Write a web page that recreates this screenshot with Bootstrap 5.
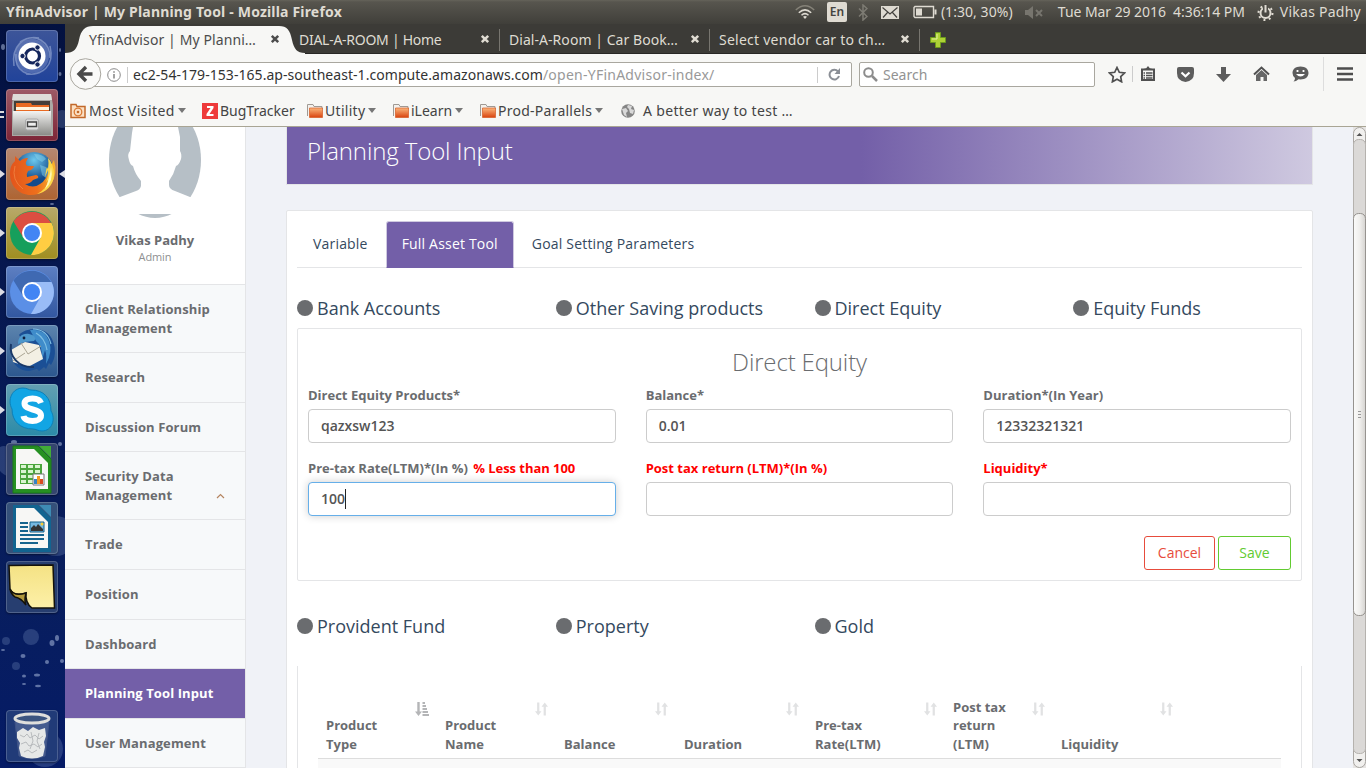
<!DOCTYPE html>
<html lang="en">
<head>
<meta charset="utf-8">
<title>YfinAdvisor | My Planning Tool</title>
<meta name="viewport" content="width=device-width, initial-scale=1">
<link href="https://cdn.jsdelivr.net/npm/bootstrap@5.3.0/dist/css/bootstrap.min.css" rel="stylesheet">
<style>
:root{--purple:#735fa8;--line:#e4e5e7;--ink:#6a6c6f;--ui:"Noto Sans","Open Sans",sans-serif}
html,body{height:100%;overflow:hidden}
body{width:1366px;height:768px;font-family:"Open Sans",sans-serif;font-size:13px;line-height:1.42857;color:var(--ink);background:#f0f2f7}
svg{display:block;flex:none}
.desk{width:1366px;height:768px}
/* desktop menu bar */
.menubar{height:24px;background:linear-gradient(#65635a 0,#57554e 2px,#403f3a 24px);color:#dfdbd2;font:14px/24px var(--ui);padding:0 5px 0 6px;white-space:nowrap}
.menubar .wintitle{font-weight:700;font-size:14px;width:789px;letter-spacing:.18px}
.kbd-lang{width:20px;height:20px;background:#dfdbd2;color:#454440;border-radius:2px;font:600 12px/20px var(--ui);text-align:center}
/* launcher */
.launcher{width:65px;gap:7px;padding-top:6px;background:#071a55;position:relative}
.launcher>svg.sky{position:absolute;left:0;top:0}
.tile{width:52px;height:52px;margin-left:6px;border-radius:4px;position:relative;box-shadow:inset 0 0 0 1px #ffffff30,0 1px 2px #0006;flex:none}
.tile svg{width:52px;height:52px}
.tile.run::before{content:"";position:absolute;left:-6px;top:22px;border-left:5px solid #dcdce4;border-top:4px solid transparent;border-bottom:4px solid transparent}
.tile.focus::after{content:"";position:absolute;right:-7px;top:22px;border-right:6px solid #dcdce4;border-top:4px solid transparent;border-bottom:4px solid transparent}
.tile.two::before{content:"";position:absolute;left:-6px;top:22px;width:4px;height:7px;border-top:2px solid #ddd;border-bottom:2px solid #ddd}
/* browser chrome */
.browser{width:1301px;font-family:var(--ui)}
.tabstrip{height:30px;background:#3c3b37;padding-left:14px;border-bottom:1px solid #282725;position:relative;font-size:14px;line-height:31px;color:#dfdbd2;white-space:nowrap}
.tabstrip>svg.shape{position:absolute;left:0;top:2px}
.btab{width:210px;padding:1px 9px 0 10px;position:relative}
.btab+.btab+.btab::before{content:"";position:absolute;left:0;top:5px;height:22px;width:1px;background:#77756f}
.btab.last::after{content:"";position:absolute;right:-1px;top:5px;height:22px;width:1px;background:#77756f}
.btab.on{color:#4c4c4c}
.navrow{height:41px;background:#f7f7f5;position:relative}
.urlbox{height:25px;margin:8px 0 0 20px;width:767px;border:1px solid #a9a79f;border-radius:2px;background:#fff;font-size:14px;line-height:23px;color:#333;padding-left:21px;white-space:nowrap;letter-spacing:.05px}
.urlbox .dim{color:#999;letter-spacing:.25px}
.searchbox{height:25px;margin:8px 0 0 7px;width:236px;border:1px solid #a9a79f;border-radius:2px;background:#fff;color:#929292;font-size:14px;line-height:23px;padding-left:3px}
.backbtn{position:absolute;left:4px;top:4px}
.vline{width:1px;height:16px;background:#ccc}
.bmrow{height:32px;background:#f7f7f5;border-bottom:1px solid #a9a594;padding-left:5px;font-size:14px;line-height:30px;color:#444;white-space:nowrap;gap:0}
.bmk{gap:2px}
.caret{border-top:5px solid #777;border-left:4.5px solid transparent;border-right:4.5px solid transparent;margin-left:1px}
/* page */
.page{height:641px;overflow:hidden;font-family:"Open Sans",sans-serif;background:#f0f2f7}
.side{width:181px;background:#f7f9fa;border-right:1px solid var(--line);flex:none}
.profile{background:#fff;height:158px;border-bottom:1px solid var(--line)}
.profile .who{font-weight:700;letter-spacing:0;margin-top:13px}
.profile small{font-size:11px;color:#8e8f91;line-height:14px;letter-spacing:-.1px}
.side a{display:flex;justify-content:space-between;align-items:flex-end;padding:15px 20px;border-bottom:1px solid var(--line);font-weight:700;color:var(--ink);text-decoration:none;letter-spacing:.1px}
.side a.on{background:var(--purple);color:#fff}
.main-col{width:1027px;margin-left:40px;flex:none}
.banner{height:58px;border:1px solid var(--line);border-top:0;background:linear-gradient(90deg,var(--purple) 56%,#cfc9e0 100%);color:#fff;font-size:24px;font-weight:300;line-height:26px;padding:11px 20px;letter-spacing:-.12px}
.hpanel{margin-top:25px;height:600px;background:#fff;border:1px solid var(--line);border-radius:2px;padding:10px 10px}
.nav-tabs{--bs-nav-tabs-border-color:#e4e5e7;height:47px;font-size:14px;letter-spacing:.19px}
.nav-tabs .nav-link{color:#34495e;padding:12px 15px 13px;line-height:20px;border-radius:3px 3px 0 0;margin-right:2px}
.nav-tabs .nav-link.active{background:var(--purple);color:#fff;border-color:#cfc9e0;border-bottom-color:var(--purple)}
.kinds{--bs-gutter-x:30px;font-size:18px;line-height:26px;color:#34495e}
.kinds>div{display:flex;align-items:center;gap:4px}
.dot{width:16px;height:16px;border-radius:50%;background:#6a6c6f}
.formbox{border:1px solid var(--line);border-radius:2px;height:253px;padding:0 10px}
.formbox h3{font-size:24px;font-weight:300;color:#6a6c6f;line-height:26px;margin:20px 0 11px;text-align:center;letter-spacing:-.15px}
.formbox .row{--bs-gutter-x:30px}
.form-label{font-weight:700;margin:0 0 5px;line-height:18px;display:block;white-space:nowrap}
.bad{color:#f00}
.form-control{height:34px;font-size:14px;font-weight:600;color:#555;border-color:#ccc;border-radius:4px;padding:6px 12px;line-height:20px}
.form-control.hot{border-color:#66afe9;box-shadow:0 0 8px #0003}
.caretbar{width:1px;height:20px;background:#222;display:inline-block;vertical-align:top}
.btn{font-size:14px;line-height:20px;padding:6px 12px;border-radius:3px}
.btn-cancel{border-color:#e74c3c;color:#e74c3c;width:71px}
.btn-save{border-color:#62cb31;color:#62cb31;width:73px}
.listbox{border:1px solid var(--line);border-top:0;border-bottom:0;height:120px;margin-top:27px;padding:20px 20px 0}
.listbox table{table-layout:fixed;width:963px}
.listbox th{height:72px;vertical-align:bottom;padding:0 0 4px 8px;position:relative;line-height:18.57px;font-weight:700}
.listbox th svg{position:absolute;right:8px;bottom:42px}
.listbox thead tr{border-bottom:1px solid #ddd}
.listbox td{height:20px;background:#f9f9f9}
.sbar{width:13px;background:#d9d7d4;flex:none;margin-left:auto}
</style>
</head>
<body>
<svg width="0" height="0" style="position:absolute">
<defs>
<linearGradient id="fo" x2="0" y2="1"><stop stop-color="#fbb77c"/><stop offset="1" stop-color="#d9430f"/></linearGradient>
<linearGradient id="gy" x2="0" y2="1"><stop stop-color="#f4f4f2"/><stop offset="1" stop-color="#8b8b88"/></linearGradient>
<linearGradient id="th" x2="1"><stop stop-color="#fbfbfa"/><stop offset=".5" stop-color="#f0efed"/><stop offset="1" stop-color="#d5d3d0"/></linearGradient>
<radialGradient id="ff" cx=".5" cy=".2"><stop stop-color="#6cc8ee"/><stop offset="1" stop-color="#124b8c"/></radialGradient>
<linearGradient id="fx" x2="1"><stop stop-color="#e3541c"/><stop offset=".6" stop-color="#ee701c"/><stop offset="1" stop-color="#f9b52c"/></linearGradient>
<linearGradient id="nt" x2="0" y2="1"><stop stop-color="#f4e284"/><stop offset="1" stop-color="#fdf0a8"/></linearGradient>
<symbol id="folder" viewBox="0 0 16 16"><path d="M.5 13V1.500h5.500l1 2h8V6" fill="#f3f1ed" stroke="#a09a94"/><path d="M2.500 5H15.500v9.500h-13z" fill="url(#fo)" stroke="#d65a22" stroke-width=".7"/></symbol>
<symbol id="x" viewBox="0 0 10 10"><path d="M1.800 1.800l6.400 6.400M8.200 1.800l-6.400 6.400" stroke="currentColor" stroke-width="2.500"/></symbol>
<symbol id="sort" viewBox="0 0 14 14"><path d="M2.300 0h2.400v9.500H7L3.500 14 0 9.500h2.300zM9.300 14h2.400V4.500H14L10.500 0 7 4.500h2.300z" fill="#e1e2e3"/></symbol>
</defs>
</svg>
<div class="desk d-flex flex-column">
<header class="menubar d-flex align-items-center">
  <span class="wintitle">YfinAdvisor | My Planning Tool - Mozilla Firefox</span>
  <svg width="20" height="16" viewBox="0 0 20 16" fill="none" stroke="#dfdbd2" stroke-width="1.500"><path d="M.8 6Q10-2.500 19.200 6" stroke="#858278"/><path d="M3.800 8.700Q10 3 16.200 8.700M6.500 11.300Q10 8 13.500 11.300"/><path d="M10 15l-2-2.300q2-1.500 4 0z" fill="#dfdbd2" stroke="none"/></svg>
  <span class="kbd-lang" style="margin-left:12px">En</span>
  <svg style="margin-left:11px" width="10" height="17" viewBox="0 0 10 17" fill="none" stroke="#7d7b73" stroke-width="1.500"><path d="M1 4.500l8 8-4 3.500V1l4 3.500-8 8"/></svg>
  <svg style="margin-left:13px" width="18" height="13" viewBox="0 0 18 13"><path fill="#dfdbd2" d="M0 0h18v13H0z"/><path d="M1.500 1.500L9 8l7.500-6.500M2 11.500l4.500-5M16 11.500l-4.500-5" fill="none" stroke="#45433f" stroke-width="1.200"/></svg>
  <svg style="margin-left:14px" width="24" height="14" viewBox="0 0 24 14"><path d="M2 1.500h18.500v11H2l-1-1v-9z" fill="none" stroke="#dfdbd2" stroke-width="1.400"/><path d="M21.500 4.500h2v5h-2M3 3.500h6v7H3z" fill="#dfdbd2"/></svg>
  <span style="margin-left:4px;width:84px;letter-spacing:.05px">(1:30, 30%)</span>
  <svg width="18" height="13" viewBox="0 0 18 13"><path d="M0 4h3l5-4v13L3 9H0z" fill="#77756e"/><path d="M11 4l6 6M17 4l-6 6" stroke="#77756e" stroke-width="2"/></svg>
  <span style="margin-left:15px;width:199px;letter-spacing:-.06px">Tue Mar 29 2016&nbsp; 4:36:14 PM</span>
  <svg width="17" height="17" viewBox="0 0 17 17" fill="none" stroke="#dfdbd2"><circle cx="8.500" cy="9" r="5" stroke-width="2"/><circle cx="8.500" cy="9" r="7" stroke-width="2" stroke-dasharray="2 3.500"/><path d="M8.500 0v8" stroke="#4e4c46" stroke-width="5"/><path d="M8.500 1v7.500" stroke-width="2"/></svg>
  <span style="margin-left:6px;letter-spacing:.25px">Vikas Padhy</span>
</header>
<div class="d-flex flex-grow-1">
<aside class="launcher d-flex flex-column">
  <svg class="sky" width="65" height="744" viewBox="0 0 65 744"><defs><linearGradient id="sk" x2="0" y2="1"><stop stop-color="#031140"/><stop offset=".3" stop-color="#06174e"/><stop offset=".75" stop-color="#081e5e"/><stop offset="1" stop-color="#051b66"/></linearGradient></defs><path fill="url(#sk)" d="M0 0h65v744H0z"/><g fill="#8aa3cf" opacity=".25"><circle cx="62" cy="95" r="9"/><circle cx="4" cy="430" r="8"/><circle cx="10" cy="440" r="12"/><circle cx="56" cy="512" r="20"/><circle cx="31" cy="613" r="8"/><circle cx="6" cy="617" r="4"/><circle cx="16" cy="642" r="4"/><circle cx="45" cy="725" r="18"/></g><g fill="#b9c9e8" opacity=".5"><ellipse cx="52" cy="619" rx="2.500" ry="3"/><ellipse cx="57" cy="614" rx="2" ry="3"/><ellipse cx="23" cy="632" rx="2.500" ry="2"/><ellipse cx="47" cy="638" rx="2" ry="2"/><ellipse cx="62" cy="637" rx="2" ry="2"/><ellipse cx="37" cy="651" rx="3" ry="1.500"/><ellipse cx="24" cy="652" rx="2" ry="1.500"/><ellipse cx="38" cy="662" rx="3" ry="1.200"/><ellipse cx="24" cy="660" rx="2" ry="1"/><ellipse cx="10" cy="710" rx="3" ry="1"/><ellipse cx="14" cy="8" rx="2" ry="2"/><ellipse cx="3" cy="23" rx="2" ry="3"/><ellipse cx="60" cy="26" rx="1" ry="2"/><ellipse cx="60" cy="50" rx="1.500" ry="2"/><ellipse cx="52" cy="180" rx="2" ry="1"/><ellipse cx="14" cy="418" rx="3" ry="2"/><ellipse cx="60" cy="420" rx="2" ry="2"/><ellipse cx="3" cy="626" rx="2" ry="1"/></g></svg>
  <div class="tile" style="background:linear-gradient(#3d5599,#21439a)"><svg viewBox="0 0 52 52"><path d="M8 36C5 16 18 5 33 8M44 16c5 20-8 30-24 28M14 12C30 2 44 12 44 28M38 40C22 50 8 40 10 24" fill="none" stroke="#a8b8dc" stroke-width="1.500" opacity=".55"/><circle cx="26" cy="26" r="17" fill="#8ba0d2" opacity=".4"/><circle cx="26" cy="26" r="13.500" fill="#fff"/><circle cx="26.500" cy="26" r="7" fill="none" stroke="#15265c" stroke-width="3.200"/><g fill="#15265c" stroke="#fff"><circle cx="16.500" cy="26" r="2.700"/><circle cx="31.500" cy="17.500" r="2.700"/><circle cx="31.500" cy="34.500" r="2.700"/></g></svg></div>
  <div class="tile two" style="background:linear-gradient(#9d5a66,#7d2537)"><svg viewBox="0 0 52 52"><path d="M7 5h38l2 11v31H6V16z" fill="#aaa9a5"/><path d="M7 5h38l1 6H6z" fill="#deddd9"/><path d="M8 12h36v13H8z" fill="#443f3a"/><path d="M10 14h15l1 2h17v9H10z" fill="#e86a22"/><path d="M10 18h33v3H10z" fill="#fff4dc"/><path d="M7 22h38v24H7z" fill="url(#gy)"/><rect x="19.500" y="30" width="13" height="11" rx="2" fill="#ddd" stroke="#aaa"/><path d="M21.500 33h9v4.500h-9z" fill="#eee" stroke="#444" stroke-width="1.400"/></svg></div>
  <div class="tile run focus" style="background:linear-gradient(#b58872,#ae6432)"><svg viewBox="0 0 52 52"><circle cx="28" cy="24" r="20" fill="url(#ff)"/><path d="M28 6q9 0 12 5l-4 3-5-3zM34 17l6 2 3 6-3 5-4-3z" fill="#8ddcf2" opacity=".45"/><path d="M9 8l5 5q3-3 8-3l-2 4q-1 3 2 4h6q-1 4-6 5-2 3-1 6l9-2q3 1 2 3l-5 2q-3 4-8 4 8 5 15 0 7-4 9-15l5-9q4 14-3 24c-5 7-11 11-20 11C13 47 4 38 4 26c0-7 2-10 5-13z" fill="url(#fx)"/><path d="M42 10q6 6 6 17c0 10-9 18-17 19 6-3 11-8 11-14l-2 2q3-7 2-12l-3 7q1-7 2-10l1 2q1-6 0-11z" fill="#fbd64a"/><path d="M45 19q3 14-6 22 5-11 6-22" fill="#fff7b5"/><path d="M9 18Q5 32 17 41" fill="none" stroke="#f28b4a" opacity=".7"/></svg></div>
  <div class="tile run" style="background:linear-gradient(#b8a96a,#a08e20)"><svg viewBox="0 0 52 52"><circle cx="26" cy="26" r="22" fill="#169f5c"/><path d="M17 30L7.500 14.500A22 22 0 0 1 45 16H26z" fill="#dc4e41"/><path d="M26 16h19.500A22 22 0 0 1 25 48l9.500-17z" fill="#ffcd42"/><circle cx="26" cy="26" r="10" fill="#fff"/><circle cx="26" cy="26" r="8" fill="#4285f4"/></svg></div>
  <div class="tile run" style="background:linear-gradient(#5d7fc2,#3257a0)"><svg viewBox="0 0 52 52"><circle cx="26" cy="26" r="22" fill="#5b8fe6"/><path d="M17 30L7.500 14.500A22 22 0 0 1 45 16H26z" fill="#3f69b2"/><path d="M26 16h19.500A22 22 0 0 1 25 48l9.500-17z" fill="#99bcf7"/><circle cx="26" cy="26" r="10" fill="#fff"/><circle cx="26" cy="26" r="8" fill="#4285f4"/></svg></div>
  <div class="tile run" style="background:linear-gradient(#5c84ae,#2c578e)"><svg viewBox="0 0 52 52"><path d="M13 10C20 2 40 1 46 14c5 11 3 20-1 26l-2-2-3 6-2-2-5 4-2-2-8 2C14 46 8 40 5 33l28-5-14-9z" fill="#1b4f95"/><path d="M24 5q14-2 19 11 4 11-3 23 1-9-1-14l-3 10q1-14-6-19z" fill="#3f8cca"/><path d="M27 4q14 0 18 15M30 8q9 5 11 17" fill="none" stroke="#7fbfe4" stroke-width="1.200"/><path d="M5 25l14-8 14 3 4 14-15 8-15-5z" fill="#f3f0e4"/><path d="M15 18l7 11 13-8M7 36l12-8" fill="none" stroke="#aaa593"/><path d="M12 19c0-7 4-11 11-10 5 1 8 4 5 7l-10 1z" fill="#4e98cc"/><circle cx="18" cy="13" r="1.400" fill="#102040"/><path d="M5 19C3 31 12 43 28 42" fill="none" stroke="#1a3968" stroke-width="2"/></svg></div>
  <div class="tile run" style="background:linear-gradient(#639fb2,#2b8ba8)"><svg viewBox="0 0 52 52"><path d="M17 4c4 0 6 2 8 2 13 0 20 8 20 21 5 8 1 20-9 20-4 0-6-2-9-2C14 45 6 37 6 25 1 16 6 4 17 4z" fill="#12a5e4" stroke="#0c80b8"/><path d="M35 19c-1-3-4-4.500-8.500-4.500-5 0-8 2-8 5 0 7.500 16.500 4.500 16.500 12 0 3.500-3.500 5.500-8.500 5.500S18 35 17.500 32" fill="none" stroke="#fff" stroke-width="6"/></svg></div>
  <div class="tile" style="background:#35466f"><svg viewBox="0 0 52 52"><path d="M7 3h25l13 13v34H7z" fill="#269022" stroke="#1a7a18"/><path d="M10 6h18l14 14v26H10z" fill="#f7f7f5"/><path d="M33 3h12v12z" fill="#41ac37"/><path d="M14 21h22v20H14z" fill="#4ba53d"/><path d="M15 23.500h20M15 28.500h20M15 33.500h20M15 38.500h20" stroke="#d9f4d0" stroke-width="3" stroke-dasharray="5 2"/><path d="M27 31h11v11H27z" fill="#fff" stroke="#777"/><path d="M28 36h3v5h-3z" fill="#3484c5"/><path d="M31 33h3v8h-3z" fill="#f49a21"/><path d="M34 36h3v5h-3z" fill="#d84a20"/></svg></div>
  <div class="tile" style="background:#35517a"><svg viewBox="0 0 52 52"><path d="M7 3h25l13 13v34H7z" fill="#126490"/><path d="M10 6h18l14 14v26H10z" fill="#f7f7f5"/><path d="M33 3h12v12z" fill="#3d8bb4"/><path d="M14 21h8M14 25h8M14 29h8M14 33h24M14 37h24M14 41h18" stroke="#17658e" stroke-width="2"/><path d="M24 20h14v10H24z" fill="#75b8e0" stroke="#156189"/><path d="M25 29v-3l3-3 2 2 2-3 5 5v2z" fill="#333"/><circle cx="36" cy="22" r="1.500" fill="#f9cb32"/></svg></div>
  <div class="tile" style="background:#273e70"><svg viewBox="0 0 52 52"><path d="M3 4.500L47 4l1.500 43H26Q19 42 20 32 8 36 4 28z" fill="url(#nt)" stroke="#14120a" stroke-width="1.500"/><path d="M4 28q4 8 16 4-2 8 0 12-5-7-11-8-4-3-5-8z" fill="#b1983b" stroke="#14120a" stroke-width="1.500"/></svg></div>
  <div class="tile" style="background:#213b78;margin-top:90px"><svg viewBox="0 0 52 52"><path d="M9 12l4 34q13 5 26 0l4-34" fill="#c5d1e2" opacity=".22" stroke="#aab"/><path d="M11 22l6-4 5 3 5-4 6 3 6-2 1 8-2 6 1 5-2 9q-11 5-22 0l-2-8 1-5-3-5z" fill="#e6e8e7"/><path d="M14 25l4 2 3-3 3 4 5-3 4 4 4-3M15 34l5-2 3 4 5-2 4 3 4-3M18 42l4-2 4 3 5-3M25 22l2 9-3 8M33 23l-2 8 3 8" fill="none" stroke="#b2b6b8" stroke-width=".9"/><ellipse cx="26" cy="8.500" rx="17" ry="4.500" fill="#3c5580" stroke="#dfdfdc" stroke-width="3"/></svg></div>
</aside>
<div class="browser d-flex flex-column">
  <div class="tabstrip d-flex">
    <svg class="shape" width="240" height="28" viewBox="0 0 240 28"><path d="M0 28v-1C9 27 12 23 14 14 16 4 20 0 28 0h186c8 0 11 4 13 14 2 9 5 13 13 13v1z" fill="#f7f7f5"/></svg>
    <div class="btab on d-flex align-items-center justify-content-between"><span style="letter-spacing:.1px">YfinAdvisor | My Planni…</span><svg width="10" height="10"><use href="#x"/></svg></div>
    <div class="btab d-flex align-items-center justify-content-between"><span style="letter-spacing:-.27px">DIAL-A-ROOM | Home</span><svg width="10" height="10"><use href="#x"/></svg></div>
    <div class="btab d-flex align-items-center justify-content-between"><span style="letter-spacing:.05px">Dial-A-Room | Car Book…</span><svg width="10" height="10"><use href="#x"/></svg></div>
    <div class="btab last d-flex align-items-center justify-content-between"><span style="letter-spacing:.25px">Select vendor car to ch…</span><svg width="10" height="10"><use href="#x"/></svg></div>
    <svg class="align-self-center" style="margin:2px 0 0 11px" width="16" height="16" viewBox="0 0 16 16"><path d="M5.500 .5h5v5h5v5h-5v5h-5v-5h-5v-5h5z" fill="#aed136" stroke="#6d9b1c"/><path d="M7 2v5H2" fill="none" stroke="#e2efa0"/></svg>
  </div>
  <div class="navrow d-flex">
    <div class="urlbox d-flex align-items-center"><svg width="14" height="14" viewBox="0 0 14 14" fill="none" stroke="#8b8b8b"><circle cx="7" cy="7" r="6.300"/><path d="M7 6v4.500M7 3.200v1.600" stroke-width="1.600"/></svg><i class="vline" style="margin:0 5px 0 6px"></i><span class="flex-grow-1">ec2-54-179-153-165.ap-southeast-1.compute.amazonaws.com<span class="dim">/open-YFinAdvisor-index/</span></span><i class="vline"></i><svg style="margin:0 10px" width="13" height="13" viewBox="0 0 13 13"><path d="M10 3.500A4.800 4.800 0 1 0 11 8" fill="none" stroke="#8b8f96" stroke-width="2"/><path d="M12 0v6H6.500z" fill="#8b8f96"/></svg></div>
    <div class="searchbox d-flex align-items-center"><svg width="15" height="15" viewBox="0 0 15 15" fill="none" stroke="#8c8c8c"><circle cx="5.500" cy="5.500" r="4.300" stroke-width="2"/><path d="M9 9l5 5" stroke-width="2.500"/></svg><span style="margin-left:5px">Search</span></div>
    <svg class="backbtn" width="33" height="33" viewBox="0 0 33 33"><circle cx="16.500" cy="16" r="15.300" fill="#fafaf9" stroke="#a9a79f"/><path d="M17 9l-7 7 7 7M10.500 16h13" fill="none" stroke="#4a4a4a" stroke-width="3.400"/></svg>
    <div class="d-flex align-items-center" style="height:40px;color:#505050">
      <svg style="margin-left:13px" width="18" height="17" viewBox="0 0 18 17"><path d="M9 1.500l2.300 4.800 5.200.7-3.800 3.600.9 5.200L9 13.300l-4.600 2.500.9-5.200L1.500 7l5.200-.7z" fill="none" stroke="#505050" stroke-width="1.700"/></svg>
      <i class="vline" style="margin:0 8px 0 6px"></i>
      <svg width="14" height="16" viewBox="0 0 14 16"><path d="M1 3.500h12V14H1z" fill="#f7f7f5" stroke="#505050" stroke-width="2"/><path d="M3.500 4V2.500H5L7 0l2 2.500h1.500V4z" fill="#505050"/><path d="M2.500 7h9M2.500 9.500h9M2.500 12h9" stroke="#505050" stroke-width="1.300" stroke-dasharray="1.500 1 9"/></svg>
      <svg style="margin-left:22px" width="17" height="15" viewBox="0 0 17 15"><path d="M2 0h13q2 0 2 2v4q0 8-8.500 9Q0 14 0 6V2q0-2 2-2z" fill="#5d5d5d"/><path d="M4.500 5.500l4 3.800 4-3.800" fill="none" stroke="#fff" stroke-width="2.200"/></svg>
      <svg style="margin-left:22px" width="15" height="15" viewBox="0 0 15 15"><path d="M5 0h5v7h5l-7.500 8L0 7h5z" fill="#5d5d5d"/></svg>
      <svg style="margin-left:22px" width="17" height="16" viewBox="0 0 17 16"><path d="M1 8.500L8.500 1.500 16 8.500" fill="none" stroke="#505050" stroke-width="2"/><path d="M3 9l5.500-5L14 9v6h-3.500v-4h-3v4H3z" fill="#666"/></svg>
      <svg style="margin-left:22px" width="17" height="16" viewBox="0 0 17 16"><path d="M8.500.5c5 0 8 2.800 8 6.500s-3 6.500-8 6.500l-2-.2Q4 15.500 1.500 15.500q1.500-1.500 1.500-3.500Q.5 10 .5 7c0-3.700 3-6.500 8-6.500z" fill="#5d5d5d"/><path d="M5.500 4v2M11.500 4v2" stroke="#fff" stroke-width="1.800"/><path d="M4 8q4.500 5 9 0z" fill="#fff"/></svg>
      <i class="vline" style="height:34px;margin:0 13px 0 14px;background:#ddd"></i>
      <svg width="16" height="14" viewBox="0 0 16 14"><path d="M0 1.500h16M0 7h16M0 12.500h16" stroke="#4d4d4d" stroke-width="2.700"/></svg>
    </div>
  </div>
  <div class="bmrow d-flex">
    <div class="bmk d-flex align-items-center" style="width:132px"><svg width="16" height="16" viewBox="0 0 16 16"><path d="M1 1.500h5l1 2h8v11H1z" fill="#fbe0c4" stroke="#c2692a" stroke-width="1.500"/><circle cx="8" cy="9" r="3.800" fill="none" stroke="#d97a34" stroke-width="1.300"/><circle cx="8" cy="9" r="1.300" fill="#c2692a"/></svg><span style="margin-left:1px;letter-spacing:.45px">Most Visited</span><i class="caret"></i></div>
    <div class="bmk d-flex align-items-center" style="width:105px"><svg width="16" height="16" viewBox="0 0 16 16"><path fill="#ee3a3a" d="M0 0h16v16H0z"/><path d="M5 3h6.500v2l-4 6h4v2H4.500v-2l4-6H5z" fill="#fff"/></svg><span>BugTracker</span></div>
    <div class="bmk d-flex align-items-center" style="width:86px"><svg width="16" height="16"><use href="#folder"/></svg><span style="letter-spacing:.3px">Utility</span><i class="caret"></i></div>
    <div class="bmk d-flex align-items-center" style="width:87px"><svg width="16" height="16"><use href="#folder"/></svg><span>iLearn</span><i class="caret"></i></div>
    <div class="bmk d-flex align-items-center" style="width:140px"><svg width="16" height="16"><use href="#folder"/></svg><span style="letter-spacing:.25px">Prod-Parallels</span><i class="caret"></i></div>
    <div class="bmk d-flex align-items-center"><svg width="16" height="16" viewBox="0 0 16 16"><circle cx="8" cy="8" r="6.800" fill="#858585"/><path d="M2 6l4-1 2 3-2 2 1 4-3-2zM8 2l4 1-1 3 3 1-1 4-3-1-1-4-2-2z" fill="#d8d8d8"/></svg><span style="margin-left:5px;letter-spacing:.33px">A better way to test …</span></div>
  </div>
  <div class="page d-flex">
    <nav class="side">
      <div class="profile d-flex flex-column align-items-center">
        <svg width="92" height="91" viewBox="0 0 92 91"><ellipse cx="46" cy="33" rx="46" ry="58" fill="#b6bfc6"/><path d="M24 0l-1 6-2 18q-3 3-1 9 1 5 4 6 2 8 8 15v5q-1 4-5 5l-16 6H0v17h92V70H81l-15-6q-6-2-6-6v-4q5-7 7-15 3-1 5-7 1-5-1-8V10l-2-10z" fill="#fff"/></svg>
        <div class="who">Vikas Padhy</div><small>Admin</small>
      </div>
      <a>Client Relationship Management</a><a>Research</a><a>Discussion Forum</a>
      <a><span>Security Data<br>Management</span><svg width="9" height="6" viewBox="0 0 9 6" style="margin-bottom:5px"><path d="M1 5l3.500-3.500L8 5" fill="none" stroke="#b58560" stroke-width="1.200"/></svg></a>
      <a>Trade</a><a>Position</a><a>Dashboard</a><a class="on">Planning Tool Input</a><a>User Management</a>
    </nav>
    <main class="main-col">
      <div class="banner">Planning Tool Input</div>
      <section class="hpanel">
        <ul class="nav nav-tabs">
          <li class="nav-item"><a class="nav-link">Variable</a></li>
          <li class="nav-item"><a class="nav-link active">Full Asset Tool</a></li>
          <li class="nav-item"><a class="nav-link">Goal Setting Parameters</a></li>
        </ul>
        <div class="row kinds" style="margin-top:27px;padding-bottom:7px">
          <div class="col-3"><i class="dot"></i>Bank Accounts</div><div class="col-3"><i class="dot"></i>Other Saving products</div><div class="col-3"><i class="dot"></i>Direct Equity</div><div class="col-3"><i class="dot"></i>Equity Funds</div>
        </div>
        <div class="formbox">
          <h3>Direct Equity</h3>
          <div class="row">
            <div class="col-4"><label class="form-label">Direct Equity Products*</label><div class="form-control">qazxsw123</div></div>
            <div class="col-4"><label class="form-label">Balance*</label><div class="form-control">0.01</div></div>
            <div class="col-4"><label class="form-label">Duration*(In Year)</label><div class="form-control">12332321321</div></div>
          </div>
          <div class="row" style="margin-top:16px">
            <div class="col-4"><label class="form-label">Pre-tax Rate(LTM)*(In %) <span class="bad" style="margin-left:2px;letter-spacing:-.05px">% Less than 100</span></label><div class="form-control hot">100<i class="caretbar"></i></div></div>
            <div class="col-4"><label class="form-label bad">Post tax return (LTM)*(In %)</label><div class="form-control"></div></div>
            <div class="col-4"><label class="form-label bad">Liquidity*</label><div class="form-control"></div></div>
          </div>
          <div class="d-flex justify-content-end" style="margin-top:20px;gap:3px"><button class="btn btn-cancel">Cancel</button><button class="btn btn-save">Save</button></div>
        </div>
        <div class="row kinds" style="margin-top:32px">
          <div class="col-3"><i class="dot"></i>Provident Fund</div><div class="col-3"><i class="dot"></i>Property</div><div class="col-3"><i class="dot"></i>Gold</div>
        </div>
        <div class="listbox">
          <table>
            <colgroup><col style="width:119px"><col style="width:119px"><col style="width:120px"><col style="width:131px"><col style="width:138px"><col style="width:108px"><col style="width:128px"><col style="width:100px"></colgroup>
            <thead><tr>
              <th>Product<br>Type<svg width="14" height="14" viewBox="0 0 14 14"><path d="M2.300 0h2.400v9.500H7L3.500 14 0 9.500h2.300zM7.500 0h2.500v2H7.500zM7.500 3h3.500v2H7.500zM7.500 6h4.500v2H7.500zM7.500 9H13v2H7.500zM7.500 12H14v2H7.500z" fill="#b4b5b7"/></svg></th>
              <th>Product<br>Name<svg width="13" height="14"><use href="#sort"/></svg></th>
              <th>Balance<svg width="13" height="14"><use href="#sort"/></svg></th>
              <th>Duration<svg width="13" height="14"><use href="#sort"/></svg></th>
              <th>Pre-tax<br>Rate(LTM)<svg width="13" height="14"><use href="#sort"/></svg></th>
              <th>Post tax<br>return<br>(LTM)<svg width="13" height="14"><use href="#sort"/></svg></th>
              <th>Liquidity<svg width="13" height="14"><use href="#sort"/></svg></th><th></th>
            </tr></thead>
            <tbody><tr><td colspan="8"></td></tr></tbody>
          </table>
        </div>
      </section>
    </main>
    <div class="sbar"><svg width="13" height="641" viewBox="0 0 13 641"><path d="M0 0h13v641H0z" fill="#e6e4e2"/><rect x=".5" y=".5" width="12" height="640" rx="6" fill="#f1f0ee" stroke="#a9a6a2"/><rect x=".5" y="12.500" width="12" height="614" rx="5" fill="#dbd9d7" stroke="#b5b2ae"/><rect x=".5" y="86.500" width="12" height="402" rx="5" fill="url(#th)" stroke="#96938f"/><path d="M3.500 9h6L6.500 6zM3.500 632h6l-3 3z" fill="#555"/><path d="M5 284.500h3M5 287.500h3M5 290.500h3" stroke="#999"/></svg></div>
  </div>
</div>
</div>
</div>
<script src="https://cdn.jsdelivr.net/npm/bootstrap@5.3.0/dist/js/bootstrap.bundle.min.js"></script>
</body>
</html>
